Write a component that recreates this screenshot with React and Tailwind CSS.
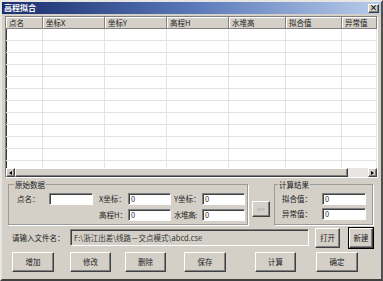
import React from 'react'

const cols = [
  { name: '点名', cls: 'w-[37px]' },
  { name: '坐标X', cls: 'w-[62px]' },
  { name: '坐标Y', cls: 'w-[62px]' },
  { name: '高程H', cls: 'w-[62px]' },
  { name: '水堆高', cls: 'w-[57px]' },
  { name: '拟合值', cls: 'w-[56px]' },
  { name: '异常值', cls: 'flex-1' },
]

const rows = Array.from({ length: 12 }, (_, i) => i)

const raised = 'border border-t-white border-l-white border-r-[#404040] border-b-[#404040] shadow-[inset_-1px_-1px_0_#808080] bg-[#d4d0c8]'
const sunken = 'border border-t-[#808080] border-l-[#808080] border-r-white border-b-white shadow-[inset_1px_1px_0_#404040]'

const Field = ({ className, value }) => (
  <div className={`h-[12px] bg-white ${sunken} ${className} flex items-center pl-[2px] text-[7.5px] leading-none text-[#333]`}>
    {value}
  </div>
)

const Btn = ({ className, children }) => (
  <button className={`h-[20px] ${raised} ${className} flex items-center justify-center text-[7.5px] leading-none text-[#222]`}>
    {children}
  </button>
)

const App = () => {
  return (
    <div
      className='w-[383px] h-[281px] bg-[#d4d0c8] border-2 border-t-[#e8e6e2] border-l-[#e8e6e2] border-r-[#505050] border-b-[#404040] flex flex-col text-[#222]'
      style={{ fontFamily: '"Noto Sans CJK SC", "Liberation Sans", sans-serif' }}
    >
      {/* title bar */}
      <div className='h-[12px] flex items-center justify-between bg-gradient-to-r from-[#1a2c6c] via-[#5a78b8] to-[#b9cdea] pl-[2px] pr-[2px]'>
        <span className='text-white font-bold text-[8px] leading-none'>高程拟合</span>
        <span className={`w-[11px] h-[9px] ${raised} flex items-center justify-center text-[8px] leading-none font-bold text-black`}>×</span>
      </div>

      {/* list view */}
      <div className={`mt-[2px] mx-[3px] h-[162px] bg-white ${sunken} flex flex-col overflow-hidden`}>
        <div className='h-[12px] flex shrink-0 bg-[#d4d0c8] border-b border-[#808080]'>
          {cols.map((c) => (
            <div key={c.name} className={`${c.cls} h-full border-r border-[#808080] shadow-[inset_1px_1px_0_#fff] flex items-center pl-[3px] text-[7.5px] leading-none`}>
              {c.name}
            </div>
          ))}
        </div>
        <div className='flex-1 overflow-hidden'>
          {rows.map((r) => (
            <div key={r} className='h-[12px] flex border-b border-[#e4e4e4]'>
              {cols.map((c) => (
                <div key={c.name} className={`${c.cls} h-full border-r border-[#e4e4e4]`} />
              ))}
            </div>
          ))}
        </div>
        {/* horizontal scrollbar */}
        <div className='h-[9px] shrink-0 flex bg-[#e8e6e2]'>
          <div className={`w-[9px] h-full ${raised} flex items-center justify-center`}>
            <span className='w-0 h-0 border-y-[2px] border-y-transparent border-r-[3px] border-r-black' />
          </div>
          <div className={`w-[333px] h-full ${raised}`} />
          <div className='flex-1' />
          <div className={`w-[9px] h-full ${raised} flex items-center justify-center`}>
            <span className='w-0 h-0 border-y-[2px] border-y-transparent border-l-[3px] border-l-black' />
          </div>
        </div>
      </div>

      {/* groups */}
      <div className='mt-[3px] flex items-start'>
        <fieldset className='ml-[6px] w-[240px] h-[44px] border border-[#9a9a9a] shadow-[1px_1px_0_#fff]'>
          <legend className='ml-[5px] px-[1px] text-[7.5px] leading-none'>原始数据</legend>
          <div className='flex items-center mt-[4px] text-[7.5px] leading-none whitespace-nowrap'>
            <span className='w-[40px] pl-[8px]'>点名：</span>
            <Field className='w-[44px]' value='' />
            <span className='w-[35px] pl-[6px]'>X坐标：</span>
            <Field className='w-[43px]' value='0' />
            <span className='w-[31px] pl-[3px]'>Y坐标：</span>
            <Field className='w-[43px]' value='0' />
          </div>
          <div className='flex items-center mt-[4px] text-[7.5px] leading-none whitespace-nowrap'>
            <span className='w-[84px]' />
            <span className='w-[35px] pl-[6px]'>高程H：</span>
            <Field className='w-[43px]' value='0' />
            <span className='w-[31px] pl-[3px] tracking-[-0.5px]'>水堆高:</span>
            <Field className='w-[43px]' value='0' />
          </div>
        </fieldset>
        <button className={`ml-[4px] mt-[20px] w-[18px] h-[16px] ${raised} flex items-center justify-center text-[7px] leading-none text-[#a0a0a0]`}>
          &gt;&gt;
        </button>
        <fieldset className='ml-[4px] w-[99px] h-[44px] border border-[#9a9a9a] shadow-[1px_1px_0_#fff]'>
          <legend className='ml-[3px] px-[1px] text-[7.5px] leading-none'>计算结果</legend>
          <div className='flex items-center mt-[4px] text-[7.5px] leading-none whitespace-nowrap'>
            <span className='w-[47px] pl-[7px]'>拟合值：</span>
            <Field className='w-[44px]' value='0' />
          </div>
          <div className='flex items-center mt-[3px] text-[7.5px] leading-none whitespace-nowrap'>
            <span className='w-[47px] pl-[7px]'>异常值：</span>
            <Field className='w-[44px]' value='0' />
          </div>
        </fieldset>
      </div>

      {/* file row */}
      <div className='mt-[2px] h-[21px] flex items-center text-[7.5px] leading-none whitespace-nowrap'>
        <span className='ml-[10px] w-[58px]'>请输入文件名：</span>
        <div className={`w-[239px] h-[17px] ${sunken} flex items-center pl-[3px] text-[#333]`}>
          F:\浙江出差\线路－交点模式\abcd.cse
        </div>
        <Btn className='ml-[6px] w-[25px]'>打开</Btn>
        <Btn className='ml-[9px] w-[24px] outline outline-1 outline-black'>新建</Btn>
      </div>

      {/* bottom buttons */}
      <div className='mt-[4px] flex'>
        <Btn className='ml-[10px] w-[42px]'>增加</Btn>
        <Btn className='ml-[16px] w-[41px]'>修改</Btn>
        <Btn className='ml-[14px] w-[41px]'>删除</Btn>
        <Btn className='ml-[18px] w-[42px]'>保存</Btn>
        <Btn className='ml-[29px] w-[41px]'>计算</Btn>
        <Btn className='ml-[20px] w-[42px]'>确定</Btn>
      </div>
    </div>
  )
}

export default App
